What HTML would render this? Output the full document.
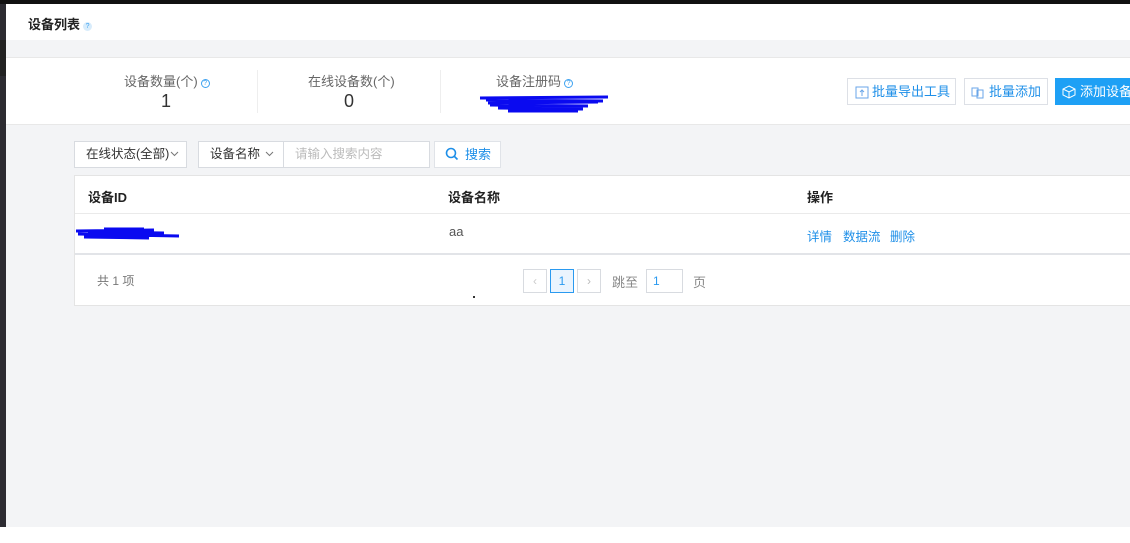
<!DOCTYPE html>
<html><head><meta charset="utf-8"><style>
*{margin:0;padding:0;box-sizing:border-box}
body{width:1130px;height:543px;overflow:hidden;position:relative;background:#fff;font-family:"Liberation Sans","Noto Sans CJK SC",sans-serif;font-size:12px;color:#333}
.a{position:absolute;white-space:nowrap}
.q{display:inline-block;width:9px;height:9px;border-radius:50%;border:1px solid #3ea2f0;color:#3ea2f0;font-size:7px;line-height:7px;text-align:center;vertical-align:1px;margin-left:3px}
.btn{position:absolute;height:27px;border:1px solid #dde0e6;background:#fff;color:#1e8fe8;font-size:13px;line-height:25px;padding-left:24px;white-space:nowrap}
.box{position:absolute;border:1px solid #d8dbe0;background:#fff;white-space:nowrap}
</style></head><body>
<div class="a" style="left:0;top:0;width:1130px;height:4px;background:#111"></div>
<div class="a" style="left:0;top:4px;width:6px;height:523px;background:#2c2b31"></div>
<div class="a" style="left:0;top:40px;width:6px;height:36px;background:#222"></div>
<div class="a" style="left:6px;top:4px;width:1124px;height:36px;background:#fff"></div>
<div class="a" style="left:28px;top:14px;font-size:13px;color:#222;font-weight:bold">设备列表<span class="q" style="background:#d8ecfb;border-color:#d8ecfb;font-weight:normal">?</span></div>
<div class="a" style="left:6px;top:40px;width:1124px;height:487px;background:#f3f4f6"></div>
<div class="a" style="left:6px;top:57px;width:1124px;height:68px;background:#fff;border-top:1px solid #e8e8e8;border-bottom:1px solid #e8e8e8"></div>
<div class="a" style="left:257px;top:70px;width:1px;height:43px;background:#eee"></div>
<div class="a" style="left:440px;top:70px;width:1px;height:43px;background:#eee"></div>
<div class="a" style="left:124px;top:71px;font-size:13px;color:#666">设备数量(个)<span class="q">?</span></div>
<div class="a" style="left:161px;top:91px;font-size:18px;color:#333">1</div>
<div class="a" style="left:308px;top:71px;font-size:13px;color:#666">在线设备数(个)</div>
<div class="a" style="left:344px;top:91px;font-size:18px;color:#333">0</div>
<div class="a" style="left:496px;top:71px;font-size:13px;color:#666">设备注册码<span class="q">?</span></div>
<svg class="a" style="left:478px;top:92px" width="140" height="22"><path d="M2 6 L130 5 M8 8 L125 9 M10 11 L120 10 M12 13 L110 14 M20 16 L105 17 M30 19 L100 19" stroke="#0a0af0" stroke-width="3" fill="none"/></svg>
<div class="btn" style="left:847px;top:78px;width:109px">批量导出工具</div>
<svg class="a" style="left:855px;top:85px" width="14" height="14"><rect x="1" y="2" width="12" height="11" fill="none" stroke="#6aa6e8"/><path d="M7 11V5M5 7l2-2 2 2" stroke="#6aa6e8" fill="none"/></svg>
<div class="btn" style="left:964px;top:78px;width:84px">批量添加</div>
<svg class="a" style="left:971px;top:85px" width="14" height="14"><rect x="1" y="3" width="6" height="8" fill="none" stroke="#6aa6e8"/><rect x="6" y="5" width="6" height="8" fill="none" stroke="#6aa6e8"/></svg>
<div class="btn" style="left:1055px;top:78px;width:80px;background:#1ea0f5;border-color:#1ea0f5;color:#fff">添加设备</div>
<svg class="a" style="left:1062px;top:85px" width="14" height="14"><path d="M7 1l6 3v6l-6 3-6-3V4zM1 4l6 3 6-3M7 7v6" stroke="#fff" fill="none"/></svg>
<div class="box" style="left:74px;top:141px;width:113px;height:27px;font-size:12.5px;line-height:25px;padding-left:11px">在线状态(全部)</div>
<svg class="a" style="left:170px;top:151px" width="9" height="6"><path d="M1 1l3.5 3.5L8 1" stroke="#777" fill="none"/></svg>
<div class="box" style="left:198px;top:141px;width:86px;height:27px;font-size:12.5px;line-height:25px;padding-left:11px">设备名称</div>
<svg class="a" style="left:265px;top:151px" width="9" height="6"><path d="M1 1l3.5 3.5L8 1" stroke="#777" fill="none"/></svg>
<div class="box" style="left:283px;top:141px;width:147px;height:27px;font-size:12.5px;line-height:25px;padding-left:11px;color:#bbb">请输入搜索内容</div>
<div class="box" style="left:434px;top:141px;width:67px;height:27px;font-size:13px;line-height:25px;padding-left:30px;color:#1e8fe8;border-color:#e0e3e8">搜索</div>
<svg class="a" style="left:445px;top:147px" width="14" height="14"><circle cx="6" cy="6" r="4.5" stroke="#1e8fe8" stroke-width="1.6" fill="none"/><path d="M9.5 9.5l3 3" stroke="#1e8fe8" stroke-width="1.6"/></svg>
<div class="a" style="left:74px;top:175px;width:1056px;height:131px;background:#fff;border:1px solid #e4e4e4;border-right:none"></div>
<div class="a" style="left:75px;top:213px;width:1055px;height:1px;background:#eaeaea"></div>
<div class="a" style="left:75px;top:253px;width:1055px;height:2px;background:#e2e4e8"></div>
<div class="a" style="left:88px;top:187px;font-size:13px;font-weight:bold;color:#222">设备ID</div>
<div class="a" style="left:448px;top:187px;font-size:13px;font-weight:bold;color:#222">设备名称</div>
<div class="a" style="left:807px;top:187px;font-size:13px;font-weight:bold;color:#222">操作</div>
<svg class="a" style="left:74px;top:226px" width="110" height="14"><path d="M2 5 L80 4 M4 8 L105 10 M10 11 L75 12 M30 3 L70 3 M14 6 L90 7" stroke="#0a0af0" stroke-width="3" fill="none"/></svg>
<div class="a" style="left:449px;top:224px;font-size:13px;color:#555">aa</div>
<div class="a" style="left:807px;top:226px;font-size:12.5px;color:#1e8fe8">详情</div>
<div class="a" style="left:843px;top:226px;font-size:12.5px;color:#1e8fe8">数据流</div>
<div class="a" style="left:890px;top:226px;font-size:12.5px;color:#1e8fe8">删除</div>
<div class="a" style="left:97px;top:272px;font-size:12px;color:#777">共 1 项</div>
<div class="box" style="left:523px;top:269px;width:24px;height:24px;color:#ccc;text-align:center;line-height:22px">‹</div>
<div class="box" style="left:550px;top:269px;width:24px;height:24px;border-color:#2a9af0;background:#eaf4fe;color:#2a9af0;text-align:center;line-height:22px">1</div>
<div class="box" style="left:577px;top:269px;width:24px;height:24px;color:#bbb;text-align:center;line-height:22px">›</div>
<div class="a" style="left:612px;top:272px;font-size:13px;color:#888">跳至</div>
<div class="box" style="left:646px;top:269px;width:37px;height:24px;padding-left:6px;line-height:22px;color:#2a9af0">1</div>
<div class="a" style="left:693px;top:272px;font-size:13px;color:#888">页</div>
<div class="a" style="left:473px;top:296px;width:2px;height:2px;background:#333"></div>
</body></html>
